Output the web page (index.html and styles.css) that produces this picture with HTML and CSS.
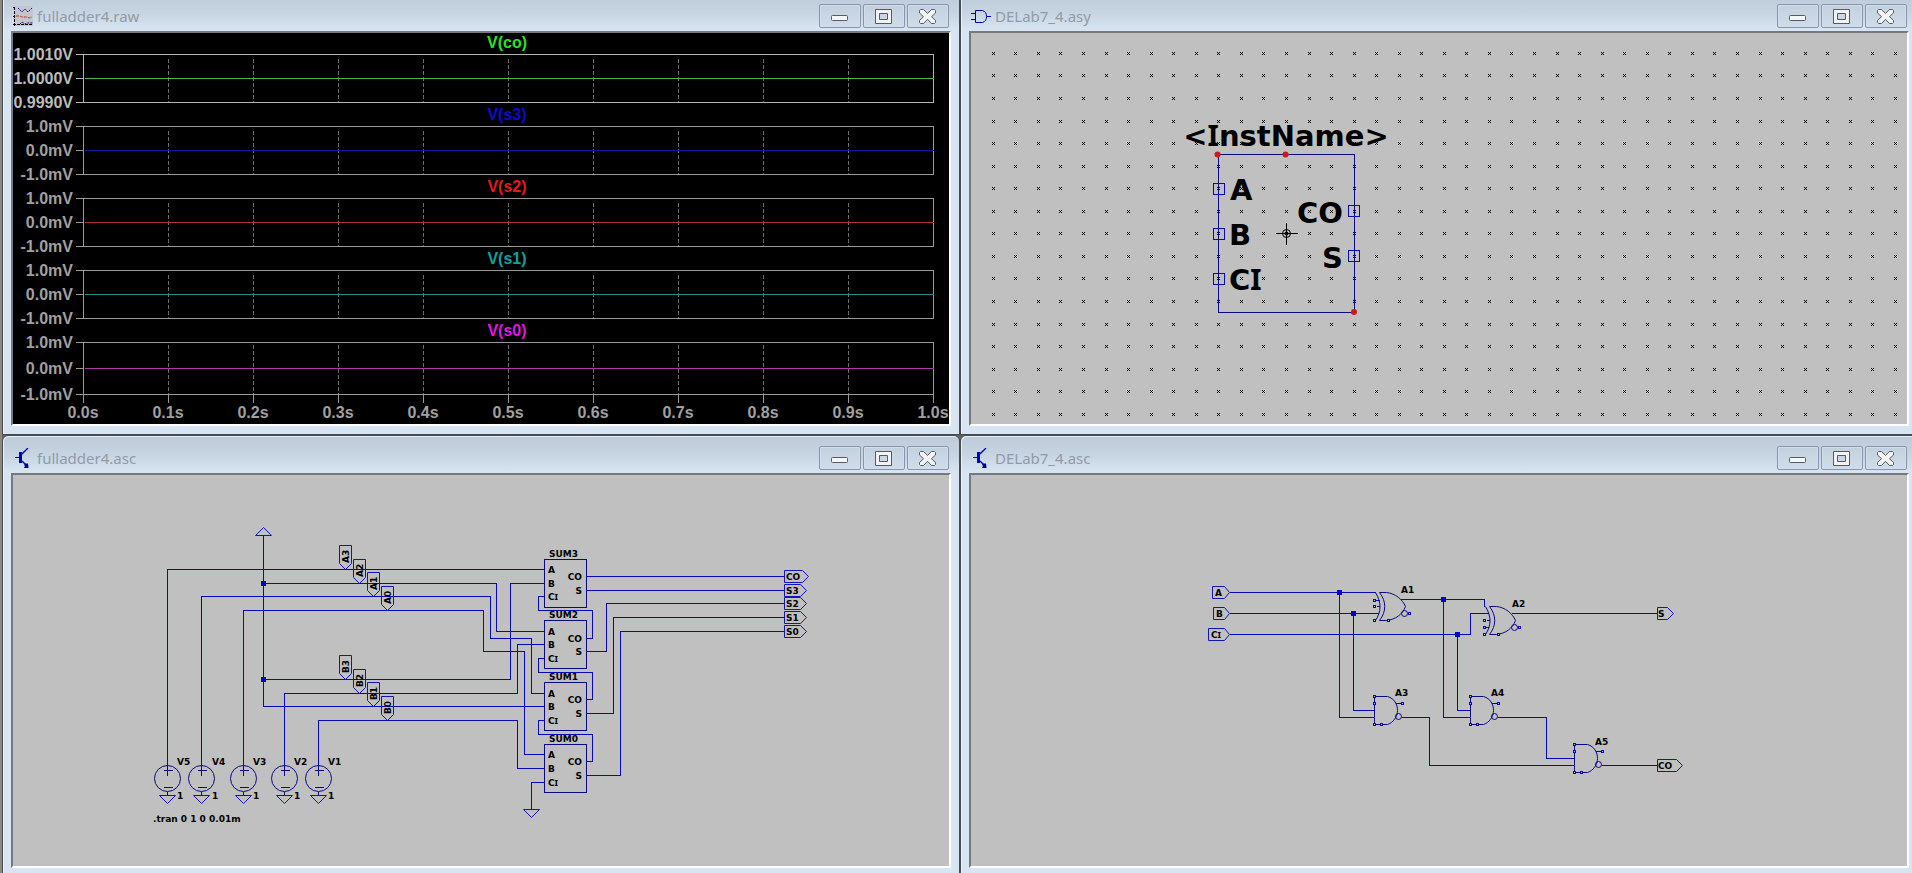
FILE: index.html
```html
<!DOCTYPE html>
<html lang="en">
<head>
<meta charset="utf-8">
<title>Full adder workspace</title>
<link rel="stylesheet" href="styles.css">
</head>
<body>
<svg class="sprites" width="0" height="0" aria-hidden="true">
  <defs>
    <symbol id="ic-min" viewBox="1 -1 20 20">
      <rect x="2.5" y="8.500" width="16" height="5" rx="1" fill="#f6f6f6" stroke="#555a66"/>
    </symbol>
    <symbol id="ic-max" viewBox="1 -1 20 20">
      <path d="M2.500 2.500h16v14h-16zM6.500 6.500v6h8v-6z" fill="#f3f3f3" fill-rule="evenodd" stroke="#555a66" stroke-linejoin="round"/>
    </symbol>
    <symbol id="ic-close" viewBox="1 -1 20 20">
      <path d="M3.500 2.500h3l4 4 4-4h3l1 1V6l-4 3.700 4 3.800v2l-1 1h-3l-4-4.200-4 4.200h-3l-1-1v-2l4-3.800-4-3.700V3.500z" fill="#f3f3f3" stroke="#555a66" stroke-linejoin="round"/>
    </symbol>
    <symbol id="ic-transistor" viewBox="0 0 20 20">
      <path d="M2 9h6v1H2z" fill="#0000b4"/>
      <path d="M6 4h3v11H6z" fill="#0000c8"/>
      <path d="M9 6l6-6M9 13l5 5" stroke="#0000b4" stroke-width="1.400" fill="none"/>
      <path d="M15.500 20H11l1-2-1-1 2-2 1 1 1-1z" fill="#0000a0"/>
    </symbol>
    <symbol id="ic-gate" viewBox="0 0 20 20">
      <path d="M4.500 4.500h7c3 1 4 3 4 6s-1 5-4 6h-7zM0 7.500h4M0 13.500h4M16 10.500h4" fill="none" stroke="#0000a0"/>
    </symbol>
    <symbol id="ic-wave" viewBox="0 0 20 20">
      <path d="M1 0h19v20H1z" fill="#c6c4cc"/>
      <path d="M1.500 1v19M0 1.500h2M0 10.500h2M0 18.500h20" stroke="#000" fill="none" stroke-dasharray="3 1"/>
      <path d="M5 2l4 4 3-3 3 3 4-4" stroke="#101090" fill="none" stroke-dasharray="2 1"/>
      <path d="M3 10h4l2 1h5l2 1 3-1" stroke="#c03030" fill="none" stroke-dasharray="3 1"/>
      <path d="M7 18l2-2 3 2 2-1h6" stroke="#101090" fill="none" stroke-dasharray="2 1"/>
    </symbol>
    <g id="source">
      <circle class="part-round" cy="13" r="13"/>
      <path class="part" d="M0 0v10M-4 5h9M-4 22h9M0 26v4"/>
      <path class="tag" d="M-8 30H8L0 38z"/>
    </g>
    <g id="adder">
      <path class="part" d="M0 0h42v48H0z"/>
    </g>
    <g id="xor">
      <path class="part-round" d="M1 0c6 10 6 19 0 28M5 0c7 9 7 19 0 28M5 0h7c9 1 16 7 19 14-3 8-10 13-19 14H5"/>
      <circle class="part-round" cx="30" cy="21" r="3"/>
      <path class="part" d="M2 14h3"/>
      <path class="pin" d="M-1 13h2v2h-2zM-1 27h2v2h-2zM13 27h2v2h-2zM34 20h2v2h-2z"/>
    </g>
    <g id="and">
      <path class="part-round" d="M0 0h13c7 2 10 8 10 14s-4 12-10 14H0"/>
      <circle class="part-round" cx="24" cy="20" r="3"/>
      <path class="part" d="M0 0v28M21 7h6"/>
      <path class="pin" d="M-1-1h2v2h-2zM-1 6h2v2h-2zM-1 27h2v2h-2zM6 27h2v2h-2zM27 6h2v2h-2z"/>
    </g>
    <path id="net-down" class="tag" d="M-6-24H6v18L0 0l-6-6z"/>
  </defs>
</svg>

<main class="desktop">
  <section class="window">
    <header class="titlebar">
      <svg class="app-icon"><use href="#ic-wave"/></svg>
      <h2 class="title">fulladder4.raw</h2>
      <div class="controls">
        <button class="control" type="button" aria-label="Minimize"><svg><use href="#ic-min"/></svg></button>
        <button class="control" type="button" aria-label="Maximize"><svg><use href="#ic-max"/></svg></button>
        <button class="control" type="button" aria-label="Close"><svg><use href="#ic-close"/></svg></button>
      </div>
    </header>
    <svg class="client plot" viewBox="12.5 32.5 936 391">
      <g class="cursor-grid">
        <path d="M168 58V102M253 58V102M338 58V102M423 58V102M508 58V102M593 58V102M678 58V102M763 58V102M848 58V102"/>
        <path d="M168 130V174M253 130V174M338 130V174M423 130V174M508 130V174M593 130V174M678 130V174M763 130V174M848 130V174"/>
        <path d="M168 202V246M253 202V246M338 202V246M423 202V246M508 202V246M593 202V246M678 202V246M763 202V246M848 202V246"/>
        <path d="M168 274V318M253 274V318M338 274V318M423 274V318M508 274V318M593 274V318M678 274V318M763 274V318M848 274V318"/>
        <path d="M168 344V394M253 344V394M338 344V394M423 344V394M508 344V394M593 344V394M678 344V394M763 344V394M848 344V394"/>
      </g>
      <g class="axes">
        <path class="active" d="M75 54H933V102H75M83 54V102M75 78h8"/>
        <path d="M75 126H933V174H75M83 126V174M75 150h8"/>
        <path d="M75 198H933V246H75M83 198V246M75 222h8"/>
        <path d="M75 270H933V318H75M83 270V318M75 294h8"/>
        <path d="M75 342H933V394H75M83 342V402M75 368h8"/>
        <path d="M168 394v8M253 394v8M338 394v8M423 394v8M508 394v8M593 394v8M678 394v8M763 394v8M848 394v8M933 394v8"/>
      </g>
      <g class="traces">
        <path class="t-co" d="M84 78H933"/>
        <path class="t-s3" d="M84 150H933"/>
        <path class="t-s2" d="M84 222H933"/>
        <path class="t-s1" d="M84 294H933"/>
        <path class="t-s0" d="M84 368H933"/>
      </g>
      <g class="trace-names" transform="translate(-.5 -.5)">
        <text class="n-co" x="507" y="48">V(co)</text>
        <text class="n-s3" x="507" y="120">V(s3)</text>
        <text class="n-s2" x="507" y="192">V(s2)</text>
        <text class="n-s1" x="507" y="264">V(s1)</text>
        <text class="n-s0" x="507" y="336">V(s0)</text>
      </g>
      <g class="y-labels" transform="translate(-.5 -.5)">
        <text class="active" x="73" y="60">1.0010V</text><text class="active" x="73" y="84">1.0000V</text><text class="active" x="73" y="108">0.9990V</text>
        <text x="73" y="132">1.0mV</text><text x="73" y="156">0.0mV</text><text x="73" y="180">-1.0mV</text>
        <text x="73" y="204">1.0mV</text><text x="73" y="228">0.0mV</text><text x="73" y="252">-1.0mV</text>
        <text x="73" y="276">1.0mV</text><text x="73" y="300">0.0mV</text><text x="73" y="324">-1.0mV</text>
        <text x="73" y="348">1.0mV</text><text x="73" y="374">0.0mV</text><text x="73" y="400">-1.0mV</text>
      </g>
      <g class="x-labels" transform="translate(-.5 -.5)">
        <text x="83" y="418">0.0s</text><text x="168" y="418">0.1s</text><text x="253" y="418">0.2s</text><text x="338" y="418">0.3s</text>
        <text x="423" y="418">0.4s</text><text x="508" y="418">0.5s</text><text x="593" y="418">0.6s</text><text x="678" y="418">0.7s</text>
        <text x="763" y="418">0.8s</text><text x="848" y="418">0.9s</text><text x="933" y="418">1.0s</text>
      </g>
    </svg>
  </section>

  <section class="window">
    <header class="titlebar">
      <svg class="app-icon"><use href="#ic-gate"/></svg>
      <h2 class="title">DELab7_4.asy</h2>
      <div class="controls">
        <button class="control" type="button" aria-label="Minimize"><svg><use href="#ic-min"/></svg></button>
        <button class="control" type="button" aria-label="Maximize"><svg><use href="#ic-max"/></svg></button>
        <button class="control" type="button" aria-label="Close"><svg><use href="#ic-close"/></svg></button>
      </div>
    </header>
    <svg class="client sheet" viewBox="970.5 32.5 936 391">
      <g class="symbol-text" transform="translate(-.5 -.5)">
        <text class="mid" x="1286" y="146">&lt;<tspan class="slab">I</tspan>nstName&gt;</text>
        <text x="1230" y="200">A</text>
        <text x="1229" y="245">B</text>
        <text x="1229" y="290">C<tspan class="slab">I</tspan></text>
        <text class="end" x="1343" y="223">CO</text>
        <text class="end" x="1343" y="268">S</text>
      </g>
      <path id="dots" class="dots" d=""/>
      <path class="part" d="M1218 154H1354V312H1218z"/>
      <path class="port" d="M1213 183h11v11h-11zM1213 228h11v11h-11zM1213 273h11v11h-11zM1348 205h11v11h-11zM1348 250h11v11h-11z"/>
      <path class="origin" d="M1275 233h22M1286 222v22"/>
      <circle class="origin-ring" cx="1286" cy="233" r="4"/>
      <circle cx="1286" cy="233" r="2"/>
      <g class="handles"><circle cx="1217" cy="154" r="3"/><circle cx="1285" cy="154" r="3"/><circle cx="1353.500" cy="311.500" r="3"/></g>
    </svg>
  </section>

  <section class="window">
    <header class="titlebar">
      <svg class="app-icon"><use href="#ic-transistor"/></svg>
      <h2 class="title">fulladder4.asc</h2>
      <div class="controls">
        <button class="control" type="button" aria-label="Minimize"><svg><use href="#ic-min"/></svg></button>
        <button class="control" type="button" aria-label="Maximize"><svg><use href="#ic-max"/></svg></button>
        <button class="control" type="button" aria-label="Close"><svg><use href="#ic-close"/></svg></button>
      </div>
    </header>
    <svg class="client sheet" viewBox="12.5 474.5 936 391">
      <g class="wires">
        <path d="M263 535V706H544M263 583H496V631H544M263 679H510V583H544"/>
        <path d="M167 765V569H544M201 765V596H490V638H531V693H544M243 765V610H483V651H524V754H544"/>
        <path d="M284 765V693H517V644H544M318 765V720H517V768H544"/>
        <path d="M544 596H538V610H592V638H586M544 658H538V672H592V699H586M544 720H538V734H592V761H586M544 782H531V809"/>
        <path d="M586 576H784M586 590H784M586 651H606V603H784M586 713H613V617H784M586 775H620V631H784"/>
      </g>
      <path class="junction" transform="translate(-.5 -.5)" d="M261 581h5v5h-5zM261 677h5v5h-5z"/>
      <path class="tag" d="M255 535h16l-8-8zM523 809h16l-8 8z"/>
      <path class="tag" d="M784 570h18l6 6-6 6h-18zM784 584h16l6 6-6 6h-16zM784 597h16l6 6-6 6h-16zM784 611h16l6 6-6 6h-16zM784 625h16l6 6-6 6h-16z"/>
      <use href="#net-down" x="345" y="569"/><use href="#net-down" x="359" y="583"/><use href="#net-down" x="373" y="596"/><use href="#net-down" x="387" y="610"/>
      <use href="#net-down" x="345" y="679"/><use href="#net-down" x="359" y="693"/><use href="#net-down" x="373" y="706"/><use href="#net-down" x="387" y="720"/>
      <use href="#source" x="167" y="765"/><use href="#source" x="201" y="765"/><use href="#source" x="243" y="765"/><use href="#source" x="284" y="765"/><use href="#source" x="318" y="765"/>
      <use href="#adder" x="544" y="559"/><use href="#adder" x="544" y="620"/><use href="#adder" x="544" y="682"/><use href="#adder" x="544" y="744"/>
      <g class="labels" transform="translate(-.5 -.5)">
        <text transform="translate(349 563) rotate(-90)">A3</text><text transform="translate(363 577) rotate(-90)">A2</text>
        <text transform="translate(377 590) rotate(-90)">A1</text><text transform="translate(391 604) rotate(-90)">A0</text>
        <text transform="translate(349 673) rotate(-90)">B3</text><text transform="translate(363 687) rotate(-90)">B2</text>
        <text transform="translate(377 700) rotate(-90)">B1</text><text transform="translate(391 714) rotate(-90)">B0</text>
        <text x="549" y="557">SUM3</text><text x="548" y="573">A</text><text x="548" y="587">B</text><text x="548" y="600">C<tspan class="slab">I</tspan></text><text class="end" x="582" y="580">CO</text><text class="end" x="582" y="594">S</text>
        <text x="549" y="618">SUM2</text><text x="548" y="635">A</text><text x="548" y="648">B</text><text x="548" y="662">C<tspan class="slab">I</tspan></text><text class="end" x="582" y="642">CO</text><text class="end" x="582" y="655">S</text>
        <text x="549" y="680">SUM1</text><text x="548" y="697">A</text><text x="548" y="710">B</text><text x="548" y="724">C<tspan class="slab">I</tspan></text><text class="end" x="582" y="703">CO</text><text class="end" x="582" y="717">S</text>
        <text x="549" y="742">SUM0</text><text x="548" y="758">A</text><text x="548" y="772">B</text><text x="548" y="786">C<tspan class="slab">I</tspan></text><text class="end" x="582" y="765">CO</text><text class="end" x="582" y="779">S</text>
        <text x="786" y="580">CO</text><text x="786" y="594">S3</text><text x="786" y="607">S2</text><text x="786" y="621">S1</text><text x="786" y="635">S0</text>
        <text x="177" y="765">V5</text><text x="212" y="765">V4</text><text x="253" y="765">V3</text><text x="294" y="765">V2</text><text x="328" y="765">V1</text>
        <text x="177" y="799">1</text><text x="212" y="799">1</text><text x="253" y="799">1</text><text x="294" y="799">1</text><text x="328" y="799">1</text>
        <text x="153" y="822">.tran 0 1 0 0.01m</text>
      </g>
    </svg>
  </section>

  <section class="window">
    <header class="titlebar">
      <svg class="app-icon"><use href="#ic-transistor"/></svg>
      <h2 class="title">DELab7_4.asc</h2>
      <div class="controls">
        <button class="control" type="button" aria-label="Minimize"><svg><use href="#ic-min"/></svg></button>
        <button class="control" type="button" aria-label="Maximize"><svg><use href="#ic-max"/></svg></button>
        <button class="control" type="button" aria-label="Close"><svg><use href="#ic-close"/></svg></button>
      </div>
    </header>
    <svg class="client sheet" viewBox="970.5 474.5 936 391">
      <g class="wires">
        <path d="M1229 592H1375M1229 613H1378M1229 634H1470V613H1488"/>
        <path d="M1339 592V717H1374M1353 613V710H1374M1400 599H1484V606M1443 599V717H1470M1457 634V710H1470"/>
        <path d="M1401 717H1429V765H1574M1497 717H1546V758H1574M1511 613H1657M1601 765H1657"/>
        <path d="M1374 600h5"/>
        <path d="M1484 627h4"/>
      </g>
      <path class="junction" transform="translate(-.5 -.5)" d="M1337 590h5v5h-5zM1351 611h5v5h-5zM1441 597h5v5h-5zM1455 632h5v5h-5z"/>
      <path class="tag" d="M1212 586h12l5 6-5 6h-12zM1213 607h11l5 6-5 6h-11zM1208 628h16l5 6-5 6h-16zM1657 607h10l6 6-6 6h-10zM1657 759h19l6 6-6 6h-19z"/>
      <use href="#xor" x="1374" y="592"/><use href="#xor" x="1484" y="606"/>
      <path class="pin" d="M1373 599h2v2h-2zM1483 626h2v2h-2z"/>
      <use href="#and" x="1374" y="696"/><use href="#and" x="1470" y="696"/><use href="#and" x="1574" y="744"/>
      <g class="labels" transform="translate(-.5 -.5)">
        <text x="1215" y="596">A</text><text x="1216" y="617">B</text><text x="1211" y="638">C<tspan class="slab">I</tspan></text>
        <text x="1401" y="593">A1</text><text x="1512" y="607">A2</text><text x="1395" y="696">A3</text><text x="1491" y="696">A4</text><text x="1595" y="745">A5</text>
        <text x="1658" y="617">S</text><text x="1658" y="769">CO</text>
      </g>
    </svg>
  </section>
</main>
<script src="grid.js"></script>
</body>
</html>
```

FILE: grid.js
```js
// Editor grid: each snap point is a five-pixel cross (four corners and a centre).
(function () {
  var step = 22.55;
  var pixels = [[-1, -1], [1, -1], [0, 0], [-1, 1], [1, 1]];
  var d = "";
  for (var r = 0; r < 17; r++) {
    var y = Math.round(52.9 + r * step) - 0.5;
    for (var c = 0; c < 41; c++) {
      var x = Math.round(992.8 + c * step) - 0.5;
      pixels.forEach(function (p) {
        d += "M" + (x + p[0]) + " " + (y + p[1]) + "h1v1h-1z";
      });
    }
  }
  document.getElementById("dots").setAttribute("d", d);
})();
```

FILE: styles.css
```css
* {
  box-sizing: border-box;
}

body {
  margin: 0;
  height: 100vh;
  overflow: hidden;
  background: #8c8880;
  font-family: "Noto Sans", "Open Sans", sans-serif;
}

.sprites {
  position: absolute;
}

/* The tiled windows run slightly past the top and right screen edges. */
.desktop {
  display: grid;
  grid-template-columns: 1fr 1fr;
  margin: -7px -6px 0 2px;
  background: #6b6152;
}

.window {
  display: flex;
  flex-direction: column;
  padding: 0 8px 8px;
  border: 1px solid #454c54;
  border-radius: 6px 6px 0 0;
  background: linear-gradient(#bdcbd9 0, #c6d3e0 18px, #d7e4f1 36px, #d7e4f1);
  box-shadow: inset 1px 1px 0 #e9f0f7;
}

.titlebar {
  display: flex;
  align-items: center;
  gap: 4px;
  padding: 10px 2px 3px;
}

.app-icon {
  width: 20px;
  height: 20px;
}

.title {
  flex: 1;
  margin: 0;
  font-size: 15px;
  line-height: 22px;
  font-weight: 400;
  color: #929ba5;
}

.controls {
  display: flex;
  gap: 2px;
}

.control {
  display: flex;
  align-items: center;
  justify-content: center;
  width: 42px;
  height: 24px;
  padding: 0;
  border: 1px solid #8696b0;
  border-radius: 2px;
  background: linear-gradient(#c3d0de, #cfdcea);
  box-shadow: inset 0 0 0 1px #d3deea;
}

.control svg {
  width: 20px;
  height: 20px;
}

.client {
  display: block;
  box-sizing: content-box;
  width: calc(100% - 4px);
  height: auto;
  border: 2px solid;
  border-color: #747a80 #fff #fff #747a80;
}

.plot {
  background: #000;
  font: bold 16px "Liberation Sans", Arial, sans-serif;
}

.sheet {
  background: #c0c0c0;
  font-family: "DejaVu Sans", Verdana, sans-serif;
  font-weight: 700;
}

.axes path,
.cursor-grid path,
.traces path {
  fill: none;
  stroke: #999;
  shape-rendering: crispEdges;
}

.axes .active {
  stroke: #b4b4b4;
}

.cursor-grid path {
  stroke: #6e6e6e;
  stroke-dasharray: 4 2;
}

.traces .t-co { stroke: #50b848; }
.traces .t-s3 { stroke: #161698; }
.traces .t-s2 { stroke: #b03030; }
.traces .t-s1 { stroke: #308c88; }
.traces .t-s0 { stroke: #a83ca4; }

.trace-names text,
.x-labels text {
  text-anchor: middle;
}

.n-co { fill: #2ae22a; }
.n-s3 { fill: #0c0cd2; }
.n-s2 { fill: #e01c1c; }
.n-s1 { fill: #14a09c; }
.n-s0 { fill: #e018e0; }

.x-labels text,
.y-labels text {
  fill: #a0a0a0;
}

.y-labels text {
  text-anchor: end;
}

.y-labels .active {
  fill: #bcbcbc;
}

.symbol-text {
  font-size: 29px;
}

.labels {
  font-size: 9px;
}

.slab {
  font-family: "Noto Sans", sans-serif;
}

.mid {
  text-anchor: middle;
}

.end {
  text-anchor: end;
}

.dots {
  fill: #000;
  shape-rendering: crispEdges;
}

.wires path,
.port {
  fill: none;
  stroke: #0a0ab4;
  shape-rendering: crispEdges;
}

.part {
  fill: none;
  stroke: #0a0a80;
  shape-rendering: crispEdges;
}

.part-round {
  fill: none;
  stroke: #0a0a80;
}

.pin {
  fill: #c0c0c0;
  stroke: #0a0ab4;
  shape-rendering: crispEdges;
}

.tag {
  fill: none;
  stroke: #1414b4;
}

.junction {
  fill: #0000d0;
  shape-rendering: crispEdges;
}

.origin {
  stroke: #000;
  shape-rendering: crispEdges;
}

.origin-ring {
  fill: none;
  stroke: #000;
}

.handles {
  fill: #d01818;
}
```
